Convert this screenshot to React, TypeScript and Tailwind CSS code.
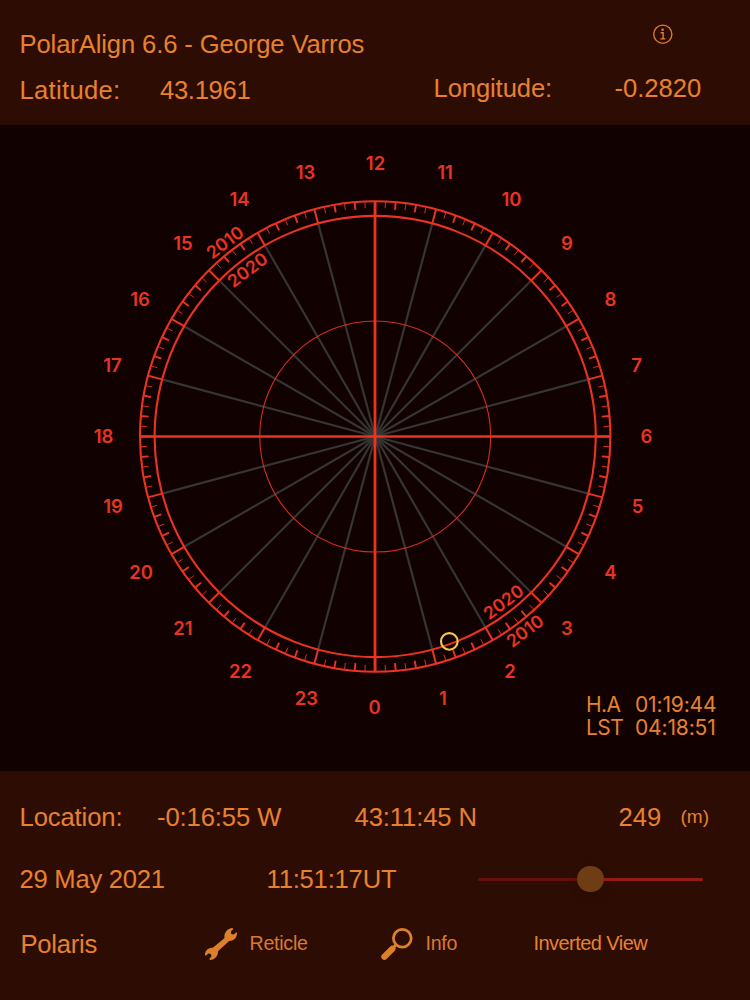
const CX = 375.2;
const CY = 311.5;
const OUTER = 235.2;
const INNER = 220.6;

// label centres inside the dial area
const HOURS: [string, number, number][] = [
  ["0", 374.5, 582.5],
  ["1", 443, 573],
  ["2", 510, 546.5],
  ["3", 567, 503],
  ["4", 610.5, 447],
  ["5", 637.5, 381],
  ["6", 646.5, 311],
  ["7", 636.5, 240],
  ["8", 610.5, 174],
  ["9", 567, 118],
  ["10", 511.5, 74],
  ["11", 445, 47],
  ["12", 375.5, 38],
  ["13", 305.5, 47],
  ["14", 239.5, 74],
  ["15", 183, 118],
  ["16", 140, 174],
  ["17", 112.5, 240],
  ["18", 103.5, 311],
  ["19", 113, 381],
  ["20", 141, 447],
  ["21", 183, 503],
  ["22", 240.5, 546.5],
  ["23", 306.5, 573],
];

const YEARS: [string, number, number][] = [
  ["2010", 225, 117.3],
  ["2020", 247.5, 145],
  ["2020", 503.5, 477],
  ["2010", 525, 506],
];

function radial(deg: number, from: number, to: number) {
  const a = (deg * Math.PI) / 180;
  return {
    x1: CX + Math.sin(a) * from,
    y1: CY - Math.cos(a) * from,
    x2: CX + Math.sin(a) * to,
    y2: CY - Math.cos(a) * to,
  };
}

function Reticle() {
  const ticks = Array.from({ length: 144 }, (_, i) => i);
  const spokes = Array.from({ length: 24 }, (_, i) => i).filter((i) => i % 6 !== 0);
  return (
    <svg className="block h-full w-full" viewBox="0 0 750 646" fill="none" stroke="#e93323">
      {spokes.map((i) => (
        <line key={i} {...radial(i * 15, 0, INNER)} stroke="#373434" strokeWidth={2.2} />
      ))}
      <circle cx={CX} cy={CY} r={115.5} strokeWidth={1.1} strokeOpacity={0.9} />
      <circle cx={CX} cy={CY} r={INNER} strokeWidth={2.1} />
      <circle cx={CX} cy={CY} r={OUTER} strokeWidth={2.1} />
      {ticks.map((i) => {
        if (i % 6 === 0) return <line key={i} {...radial(i * 2.5, INNER, OUTER)} strokeWidth={2} />;
        if (i % 2 === 0) return <line key={i} {...radial(i * 2.5, 227.5, OUTER)} strokeWidth={1.9} />;
        return <line key={i} {...radial(i * 2.5, 228.5, OUTER)} strokeWidth={1} strokeOpacity={0.9} />;
      })}
      <path d={`M${CX - OUTER} ${CY}H${CX + OUTER}`} strokeWidth={2.4} />
      <path d={`M${CX - 0.2} ${CY - OUTER}V${CY + OUTER}`} strokeWidth={2.8} />
      <g
        className="font-['Inter',sans-serif] text-[18.5px] font-[560]"
        fill="#e93323"
        stroke="none"
        textAnchor="middle"
      >
        {HOURS.map(([label, x, y]) => (
          <text key={label} x={x} y={y + 6.5}>
            {label}
          </text>
        ))}
      </g>
      <g
        className="font-['Inter',sans-serif] text-[17.5px] font-[580]"
        fill="#e93323"
        stroke="none"
        textAnchor="middle"
      >
        {YEARS.map(([label, x, y], i) => (
          <text key={i} y={6.1} transform={`translate(${x} ${y}) rotate(-37)`}>
            {label}
          </text>
        ))}
      </g>
      <circle cx={449.3} cy={516.4} r={8.3} stroke="#f3c94c" strokeWidth={2.1} />
    </svg>
  );
}

function InfoIcon() {
  return (
    <svg className="h-5 w-5" viewBox="0 0 20 20" fill="none" stroke="#e3802f" strokeWidth={1.3}>
      <circle cx="9.8" cy="10.2" r="9.1" />
      <circle cx="9.6" cy="5.7" r="1.3" fill="#e3802f" stroke="none" />
      <path d="M7.6 8.7h2.5v6M7.3 14.9h5" strokeWidth={1.4} />
    </svg>
  );
}

function WrenchIcon() {
  return (
    <svg className="h-8 w-8" viewBox="0 0 32 32" fill="#db812d">
      <path d="M19.4 10.2C19 4.8 22 .6 27.6.1L28.2 1.2 25.9 3.6 26.3 6 28.8 6.4 31.2 4.3 32 4.7C32.3 10 28.5 13.2 24.2 13L13.2 22.9C13 27.8 10 31.6 5 32L4.2 31 6.4 28.5 6 25.9 3.5 25.4 .8 27.7 0 27.3C-.2 22.3 3.4 19.6 7.8 19.7Z" />
    </svg>
  );
}

function MagnifierIcon() {
  return (
    <svg className="h-8 w-8" viewBox="0 0 32 32" fill="none" stroke="#db812d" strokeLinecap="round">
      <circle cx="21.3" cy="10.3" r="8.9" strokeWidth={2.8} />
      <path d="M14.8 17L12 20" strokeWidth={3} />
      <path d="M11.4 20.8L3.4 28.7" strokeWidth={6.2} />
    </svg>
  );
}

export default function App() {
  return (
    <div className="flex h-[1000px] w-[750px] flex-col overflow-hidden bg-[#2d0d03] font-['Liberation_Sans',Arial,sans-serif] text-[25.6px] leading-[26px] whitespace-nowrap text-[#e8812f]">
      <header className="h-[125px] shrink-0 pt-6">
        <div className="flex h-[45px] pl-[19.5px]">
          <h1 className="w-[633px] pt-[7px] tracking-[-0.11px]">PolarAlign 6.6 - George Varros</h1>
          <InfoIcon />
        </div>
        <div className="flex pt-[6px] pl-[19.5px]">
          <span className="w-[140.5px] pt-[2px] tracking-[0.3px]">Latitude:</span>
          <span className="w-[273.5px] pt-[2px] tracking-[-0.3px]">43.1961</span>
          <span className="w-[181px] tracking-[-0.1px]">Longitude:</span>
          <span>-0.2820</span>
        </div>
      </header>

      <main className="relative h-[646px] shrink-0 bg-[#110101]">
        <Reticle />
        <dl className="absolute top-[568px] left-[586px] grid grid-cols-[49px_auto] font-['Inter',sans-serif] text-[21px] leading-[23px] font-normal">
          <dt className="tracking-[-0.6px]">H.A</dt>
          <dd className="tracking-[-0.15px]">01:19:44</dd>
          <dt className="tracking-[-0.6px]">LST</dt>
          <dd className="tracking-[-0.15px]">04:18:51</dd>
        </dl>
      </main>

      <footer className="flex flex-col pl-[19.5px]">
        <div className="flex h-[59px] items-end">
          <span className="w-[137.5px] tracking-[-0.1px]">Location:</span>
          <span className="w-[197.5px] tracking-[-0.1px]">-0:16:55 W</span>
          <span className="w-[264px] tracking-[-0.1px]">43:11:45 N</span>
          <span className="w-[62px]">249</span>
          <span className="text-[19px]">(m)</span>
        </div>
        <div className="flex h-[62px] items-end">
          <span className="w-[247px] tracking-[-0.25px]">29 May 2021</span>
          <span className="w-[211px] tracking-[-0.2px]">11:51:17UT</span>
          <div className="flex h-[26px] w-[225.5px] items-center">
            <div className="h-[3px] w-[99.5px] rounded-l-full bg-[#66100a]" />
            <div className="h-[26.6px] w-[26.6px] shrink-0 rounded-full bg-[#6e3d14] shadow-[0_4px_8px_rgba(0,0,0,0.15)]" />
            <div className="h-[3px] flex-1 rounded-r-full bg-[#961b14]" />
          </div>
        </div>
        <div className="flex h-[67.5px] items-end text-[19.6px] tracking-[-0.25px] text-[#db792c]">
          <span className="mb-[3px] w-[185.5px] pl-[1px] text-[25.6px] text-[#e8812f]">Polaris</span>
          <WrenchIcon />
          <span className="mb-[4px] ml-[12.5px] w-[131px]">Reticle</span>
          <MagnifierIcon />
          <span className="mb-[4px] ml-[13px] w-[108px]">Info</span>
          <span className="mb-[4px] text-[20px] tracking-[-0.55px] text-[#e8812f]">Inverted View</span>
        </div>
      </footer>
    </div>
  );
}
